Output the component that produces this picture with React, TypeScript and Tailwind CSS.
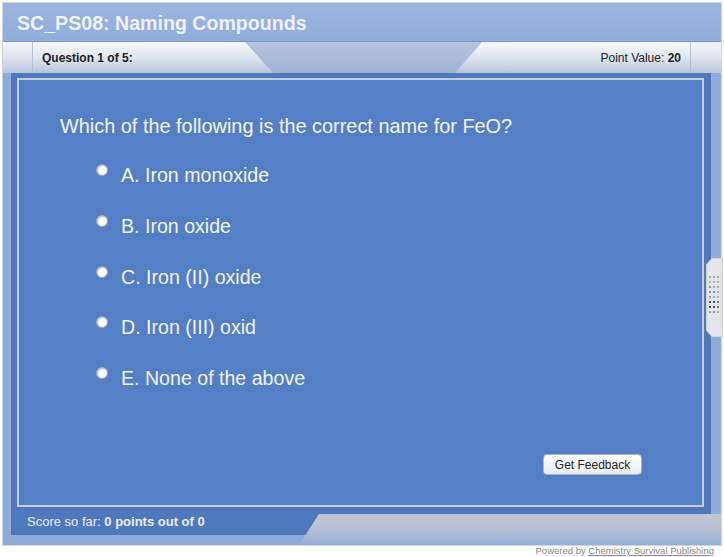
import React from "react";

const options = [
  "A. Iron monoxide",
  "B. Iron oxide",
  "C. Iron (II) oxide",
  "D. Iron (III) oxid",
  "E. None of the above",
];

function Radio() {
  return (
    <span className="block w-[12px] h-[12px] rounded-full bg-white border border-[#9aa6b8] shadow-[inset_1px_1px_1px_rgba(0,0,0,0.25)] shrink-0" />
  );
}

function Handle() {
  const dots: React.ReactNode[] = [];
  const colors = [
    ["#a8adb5", "#a8adb5", "#a8adb5"],
    ["#a8adb5", "#a8adb5", "#a8adb5"],
    ["#7f9fd0", "#a8adb5", "#a8adb5"],
    ["#7f9fd0", "#7f9fd0", "#a8adb5"],
    ["#7f9fd0", "#a8adb5", "#a8adb5"],
    ["#555", "#555", "#4f78c0"],
    ["#555", "#555", "#4f78c0"],
    ["#7f9fd0", "#7f9fd0", "#a8adb5"],
  ];
  for (let r = 0; r < 8; r++) {
    for (let c = 0; c < 3; c++) {
      dots.push(
        <rect key={`${r}-${c}`} x={3 + c * 4} y={18 + r * 5} width={2} height={2} fill={colors[r][c]} />
      );
    }
  }
  return (
    <svg width="17" height="79" viewBox="0 0 17 79" className="absolute right-[-2px] top-[255px]">
      <polygon points="6,0 17,0 17,79 6,79 0,72 0,7" fill="#e3e5e9" stroke="#b9c0cc" strokeWidth="1" />
      {dots}
    </svg>
  );
}

export default function App() {
  return (
    <div
      className="w-[724px] h-[557px] bg-white relative overflow-hidden"
      style={{ fontFamily: '"Liberation Sans", Arial, sans-serif' }}
    >
      <div className="absolute left-[2px] top-[2px] w-[720px] h-[544px] border border-[#cfd6e2] bg-[#8fabdb] flex flex-col">
        {/* Title bar */}
        <div className="h-[38px] shrink-0 bg-gradient-to-b from-[#9cb6df] to-[#90acd9] flex items-center pl-[14px] pt-[3px]">
          <span className="text-[19.6px] font-bold text-[#eef2f9]">SC_PS08: Naming Compounds</span>
        </div>
        {/* Tab bar */}
        <div className="h-[32px] shrink-0 border-t border-[#7b98c8] relative bg-gradient-to-b from-[#b5c4dc] to-[#9fb4d4] flex">
          <div className="w-[30px] h-full bg-gradient-to-b from-[#f4f6fa] via-[#dfe5ee] to-[#b9c6dc] border-r border-[#b6c2d4]" />
          <div className="w-[240px] h-full bg-gradient-to-b from-[#f8f9fc] via-[#dfe6f0] to-[#b7c5dc] [clip-path:polygon(0_0,212px_0,240px_100%,0_100%)] flex items-center pl-[9px]">
            <span className="text-[12px] font-bold text-[#222]">Question 1 of 5:</span>
          </div>
          <div className="flex-1" />
          <div className="w-[236px] h-full bg-gradient-to-b from-[#f8f9fc] via-[#dfe6f0] to-[#b7c5dc] [clip-path:polygon(27px_0,100%_0,100%_100%,0_100%)] flex items-center justify-end pr-[9px] border-r border-[#b6c2d4]">
            <span className="text-[12px] text-[#222]">
              Point Value: <b>20</b>
            </span>
          </div>
          <div className="w-[30px] h-full bg-gradient-to-b from-[#f4f6fa] via-[#dfe5ee] to-[#b9c6dc]" />
        </div>
        {/* Body */}
        <div className="flex-1 flex pl-[8px] pr-[10px] pb-[10px]">
          <div className="flex-1 bg-[#5078bd] flex flex-col pt-[5px] pl-[6px] pr-[7px]">
            <div className="h-[429px] border-2 border-[#c4cddb] bg-[#557fc4] relative">
              <div className="pl-[41px] pt-[35px] text-[19.9px] text-[#f1f5fb] leading-[22px]">
                Which of the following is the correct name for FeO?
              </div>
              <div className="flex flex-col pl-[77px] pt-[27px] gap-[28.75px]">
                {options.map((o) => (
                  <div key={o} className="flex items-start gap-[13px] h-[22px]">
                    <Radio />
                    <span className="text-[19.6px] leading-[22px] text-[#f1f5fb]">{o}</span>
                  </div>
                ))}
              </div>
              <button className="absolute left-[524px] top-[374px] w-[99px] h-[21px] rounded-[4px] bg-gradient-to-b from-[#ffffff] to-[#e9edf2] border border-[#a9b3c2] text-[12px] text-[#222] leading-none">
                Get Feedback
              </button>
            </div>
            <div className="h-[28px] flex items-center pl-[10px] pt-[1px] text-[13px] text-[#e9eef8]">
              Score so far:&nbsp;<b>0 points out of 0</b>
            </div>
          </div>
        </div>
        {/* bottom right trapezoid */}
        <div className="absolute right-0 bottom-0 w-[422px] h-[31px] bg-gradient-to-b from-[#c3c6cd] via-[#b6c2d6] to-[#93aedc] [clip-path:polygon(20px_0,100%_0,100%_100%,0_100%)]" />
        <Handle />
      </div>
      <div className="absolute right-[10px] top-[544px] text-[9.5px] text-[#8a8a8a]">
        Powered by <span className="underline">Chemistry Survival Publishing</span>
      </div>
    </div>
  );
}
